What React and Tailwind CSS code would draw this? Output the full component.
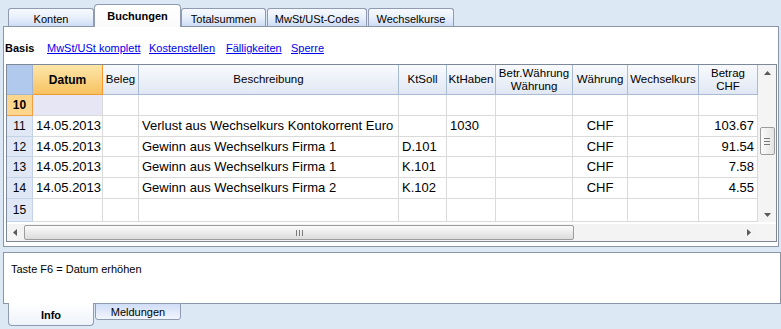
import React from "react";

const COLS = [
  { key: "nr", w: 26 },
  { key: "datum", w: 70, label: "Datum", align: "left" },
  { key: "beleg", w: 36, label: "Beleg", align: "left" },
  { key: "beschr", w: 260, label: "Beschreibung", align: "left" },
  { key: "soll", w: 48, label: "KtSoll", align: "left" },
  { key: "haben", w: 49, label: "KtHaben", align: "left" },
  { key: "betrw", w: 77, label: ["Betr.Währung", "Währung"], align: "right" },
  { key: "wahr", w: 55, label: "Währung", align: "center" },
  { key: "kurs", w: 71, label: "Wechselkurs", align: "right" },
  { key: "betrag", w: 59, label: ["Betrag", "CHF"], align: "right" },
];

const ROWS = [
  { nr: "10", h: 21 },
  { nr: "11", h: 21, datum: "14.05.2013", beschr: "Verlust aus Wechselkurs Kontokorrent Euro", haben: "1030", wahr: "CHF", betrag: "103.67" },
  { nr: "12", h: 20, datum: "14.05.2013", beschr: "Gewinn aus Wechselkurs Firma 1", soll: "D.101", wahr: "CHF", betrag: "91.54" },
  { nr: "13", h: 21, datum: "14.05.2013", beschr: "Gewinn aus Wechselkurs Firma 1", soll: "K.101", wahr: "CHF", betrag: "7.58" },
  { nr: "14", h: 21, datum: "14.05.2013", beschr: "Gewinn aus Wechselkurs Firma 2", soll: "K.102", wahr: "CHF", betrag: "4.55" },
  { nr: "15", h: 23 },
];

function Tab({ label, w, active, ml = 0 }) {
  if (active) {
    return (
      <div
        className="relative z-10 -mb-px flex h-[23px] items-start justify-center rounded-t-[4px] border border-b-0 border-[#8e9bb0] bg-gradient-to-b from-[#ffffff] to-[#fafafa] pt-[4px] text-[11px] font-bold leading-[14px] text-black"
        style={{ width: w, marginLeft: ml }}
      >
        {label}
      </div>
    );
  }
  return (
    <div
      className="flex h-[18px] items-start justify-center rounded-t-[3px] border border-b-0 border-[#8e9bb0] bg-gradient-to-b from-[#f7f9fe] via-[#e9f0fc] to-[#cddcf5] pt-[3px] text-[11px] leading-[14px] text-black"
      style={{ width: w, marginLeft: ml }}
    >
      {label}
    </div>
  );
}

function Arrow({ dir }) {
  const pts = {
    up: "0,4 3.5,0 7,4",
    down: "0,0 3.5,4 7,0",
    left: "4,0 0,3.5 4,7",
    right: "0,0 4,3.5 0,7",
  }[dir];
  const vert = dir === "up" || dir === "down";
  return (
    <svg width={vert ? 7 : 4} height={vert ? 4 : 7} viewBox={vert ? "0 0 7 4" : "0 0 4 7"}>
      <polygon points={pts} fill="#5a5a5a" />
    </svg>
  );
}

function HeaderCell({ col }) {
  if (col.key === "nr") {
    return <div className="h-full shrink-0 border-r border-b border-[#a4b6cf] bg-[#b0c9ec]" style={{ width: col.w }} />;
  }
  if (col.key === "datum") {
    return (
      <div
        className="flex h-full shrink-0 items-center justify-center border-r border-b border-[#f09a35] bg-gradient-to-b from-[#fde6a9] to-[#f6c25e] text-[12px] font-bold text-black"
        style={{ width: col.w }}
      >
        Datum
      </div>
    );
  }
  const two = Array.isArray(col.label);
  return (
    <div
      className="flex h-full shrink-0 flex-col items-center justify-center overflow-hidden border-r border-b border-[#a9bbd3] bg-gradient-to-b from-[#f8fafd] to-[#e1e8f3] text-center text-[11.5px] leading-[13px] text-black"
      style={{ width: col.w }}
    >
      {two ? (
        <>
          <div className="whitespace-nowrap">{col.label[0]}</div>
          <div className="whitespace-nowrap">{col.label[1]}</div>
        </>
      ) : (
        <div className="whitespace-nowrap">{col.label}</div>
      )}
    </div>
  );
}

function Row({ row }) {
  const isSel = row.nr === "10";
  return (
    <div className="flex shrink-0" style={{ height: row.h }}>
      {COLS.map((c) => {
        if (c.key === "nr") {
          return (
            <div
              key={c.key}
              className={
                isSel
                  ? "flex h-full shrink-0 items-center justify-center border-r border-b border-[#f0a040] bg-[#fcd68d] text-[12px] font-bold text-black"
                  : "flex h-full shrink-0 items-center justify-center border-r border-b border-[#c3d2e6] bg-[#dfe8f4] text-[12px] text-black"
              }
              style={{ width: c.w }}
            >
              {row.nr}
            </div>
          );
        }
        const val = row[c.key] || "";
        const align =
          c.key === "wahr" ? "justify-center" : c.key === "betrag" ? "justify-end pr-[3px]" : "justify-start pl-[3px]";
        const bg = isSel && c.key === "datum" ? "bg-[#e6e6f5]" : "bg-white";
        return (
          <div
            key={c.key}
            className={`flex h-full shrink-0 items-center overflow-hidden whitespace-nowrap border-r border-b border-[#dadada] text-[13px] text-black ${align} ${bg}`}
            style={{ width: c.w }}
          >
            {val}
          </div>
        );
      })}
    </div>
  );
}

export default function App() {
  return (
    <div
      className="flex h-[329px] w-[781px] flex-col overflow-hidden bg-[#dde8f5] text-black"
      style={{ fontFamily: "'Liberation Sans', Arial, sans-serif" }}
    >
      {/* top tabs */}
      <div className="flex h-[26px] shrink-0 items-end">
        <Tab label="Konten" w={86} ml={8} />
        <Tab label="Buchungen" w={87} active ml={0} />
        <Tab label="Totalsummen" w={85} ml={0} />
        <Tab label="MwSt/USt-Codes" w={100} ml={1} />
        <Tab label="Wechselkurse" w={86} ml={1} />
      </div>

      {/* main panel */}
      <div className="ml-[3px] flex h-[221px] w-[776px] shrink-0 flex-col border border-[#8a96a8] bg-white">
        <div className="flex h-[37px] shrink-0 items-start pl-[1px] pt-[14px] text-[11px] leading-[14px]">
          <span className="w-[42px] shrink-0 font-bold">Basis</span>
          <span className="w-[102px] shrink-0"><span className="text-[#0000ee] underline">MwSt/USt komplett</span></span>
          <span className="w-[77px] shrink-0"><span className="text-[#0000ee] underline">Kostenstellen</span></span>
          <span className="w-[65px] shrink-0"><span className="text-[#0000ee] underline">Fälligkeiten</span></span>
          <span className="shrink-0 text-[#0000ee] underline">Sperre</span>
        </div>

        {/* grid */}
        <div className="ml-[2px] flex h-[178px] w-[771px] shrink-0 flex-col border border-[#7d8898] bg-white">
          <div className="flex h-[157px] shrink-0">
            <div className="flex w-[751px] shrink-0 flex-col overflow-hidden">
              <div className="flex h-[30px] shrink-0">
                {COLS.map((c) => (
                  <HeaderCell key={c.key} col={c} />
                ))}
              </div>
              {ROWS.map((r) => (
                <Row key={r.nr} row={r} />
              ))}
            </div>
            {/* vertical scrollbar */}
            <div className="flex w-[18px] shrink-0 flex-col items-center bg-[#f4f4f4]">
              <div className="flex h-[14px] items-center justify-center pt-[2px]">
                <Arrow dir="up" />
              </div>
              <div className="mt-[48px] flex h-[28px] w-[15px] flex-col items-center justify-center gap-[2px] rounded-[2px] border border-[#9c9c9c] bg-gradient-to-r from-[#fbfbfb] to-[#e4e4e4]">
                <div className="h-px w-[6px] bg-[#7a7a7a]" />
                <div className="h-px w-[6px] bg-[#7a7a7a]" />
                <div className="h-px w-[6px] bg-[#7a7a7a]" />
              </div>
              <div className="flex-1" />
              <div className="flex h-[12px] items-center justify-center pb-[2px]">
                <Arrow dir="down" />
              </div>
            </div>
          </div>
          <div className="flex h-[2px] shrink-0" />
          {/* horizontal scrollbar */}
          <div className="flex h-[17px] shrink-0">
            <div className="flex w-[751px] shrink-0 items-center bg-[#f3f3f3]">
              <div className="flex w-[16px] shrink-0 items-center justify-center">
                <Arrow dir="left" />
              </div>
              <div className="relative ml-[1px] flex h-[15px] w-[550px] items-center justify-center rounded-[2px] border border-[#9c9c9c] bg-gradient-to-b from-[#fbfbfb] to-[#dcdcdc]">
                <div className="flex gap-[2px]">
                  <div className="h-[6px] w-px bg-[#7a7a7a]" />
                  <div className="h-[6px] w-px bg-[#7a7a7a]" />
                  <div className="h-[6px] w-px bg-[#7a7a7a]" />
                </div>
              </div>
              <div className="flex-1" />
              <div className="flex w-[16px] shrink-0 items-center justify-center pr-[3px]">
                <Arrow dir="right" />
              </div>
            </div>
            <div className="w-[18px] shrink-0 bg-[#f4f4f4]" />
          </div>
        </div>
      </div>

      {/* gap */}
      <div className="h-[5px] shrink-0" />

      {/* info panel */}
      <div className="ml-[3px] h-[52px] w-[778px] shrink-0 border border-[#8a96a8] bg-white pl-[7px] pt-[9px] text-[11px] leading-[14px]">
        Taste F6 = Datum erhöhen
      </div>

      {/* bottom tabs */}
      <div className="flex shrink-0 items-start">
        <div className="relative z-10 -mt-px ml-[8px] flex h-[23px] w-[86px] items-end justify-center rounded-b-[4px] border border-t-0 border-[#8e9bb0] bg-gradient-to-b from-[#ffffff] to-[#eef2fa] pb-[3px] text-[11px] font-bold leading-[14px]">
          Info
        </div>
        <div className="-mt-px ml-[1px] flex h-[17px] w-[86px] items-start justify-center rounded-b-[3px] border border-[#8e9bb0] bg-gradient-to-b from-[#cfddf6] to-[#f3f6fd] pt-[1px] text-[11px] leading-[14px]">
          Meldungen
        </div>
      </div>
    </div>
  );
}
